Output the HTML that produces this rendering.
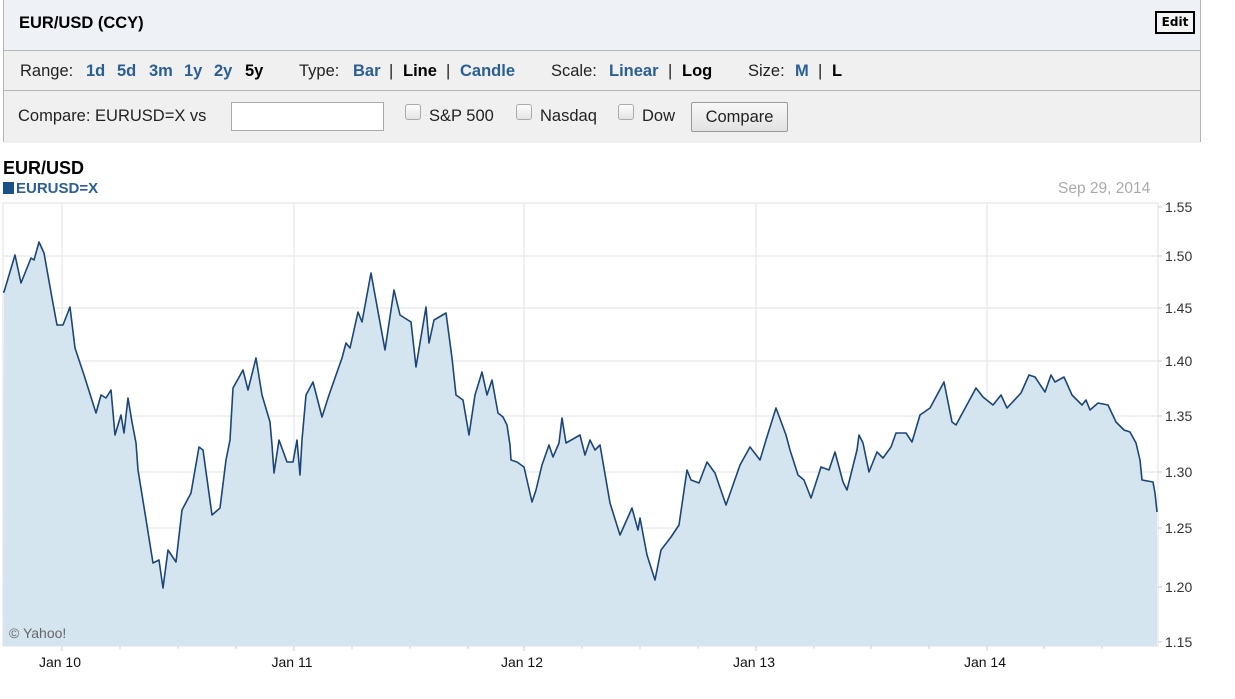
<!DOCTYPE html>
<html><head><meta charset="utf-8"><style>
body{margin:0;width:1235px;height:699px;background:#fff;font-family:"Liberation Sans",Arial,sans-serif;position:relative;overflow:hidden}
.a{position:absolute;white-space:nowrap}
#box{position:absolute;left:3px;top:0;width:1196px;height:141px;border:1px solid #b5b5b5;border-top:none;background:#eef2f6}
.row{position:absolute;left:0;width:1196px;background:#f0f0f0;border-top:1px solid #b5b5b5}
.row .a{font-size:16.5px;color:#222}
.row .l{color:#2b5f94;font-weight:bold}
.row .b{color:#000;font-weight:bold}
.cb{position:absolute;width:14px;height:14px;border:1px solid #aaa;border-radius:3px;background:linear-gradient(#fdfdfd,#e4e4e4)}
</style></head><body>
<div id="box">
 <div class="a" style="left:15px;top:14px;font-size:16.5px;font-weight:bold">EUR/USD (CCY)</div>
 <div class="a" style="left:1151px;top:11px;width:36px;height:19px;border:2px solid #000;background:#f4f4f4;font-family:'DejaVu Sans',sans-serif;font-size:12px;font-weight:bold;text-align:center;line-height:19px">Edit</div>
 <div class="row" style="top:50px;height:39px">
  <div class="a" style="left:16px;top:11px">Range:</div>
  <div class="a l" style="left:82px;top:11px">1d</div>
  <div class="a l" style="left:113px;top:11px">5d</div>
  <div class="a l" style="left:145px;top:11px">3m</div>
  <div class="a l" style="left:180px;top:11px">1y</div>
  <div class="a l" style="left:210px;top:11px">2y</div>
  <div class="a b" style="left:241px;top:11px">5y</div>
  <div class="a" style="left:295px;top:11px">Type:</div>
  <div class="a l" style="left:349px;top:11px">Bar</div>
  <div class="a" style="left:385px;top:11px">|</div>
  <div class="a b" style="left:399px;top:11px">Line</div>
  <div class="a" style="left:442px;top:11px">|</div>
  <div class="a l" style="left:456px;top:11px">Candle</div>
  <div class="a" style="left:547px;top:11px">Scale:</div>
  <div class="a l" style="left:605px;top:11px">Linear</div>
  <div class="a" style="left:664px;top:11px">|</div>
  <div class="a b" style="left:678px;top:11px">Log</div>
  <div class="a" style="left:744px;top:11px">Size:</div>
  <div class="a l" style="left:791px;top:11px">M</div>
  <div class="a" style="left:814px;top:11px">|</div>
  <div class="a b" style="left:828px;top:11px">L</div>
 </div>
 <div class="row" style="top:90px;height:52px">
  <div class="a" style="left:14px;top:16px">Compare: EURUSD=X vs</div>
  <div class="a" style="left:227px;top:11px;width:151px;height:27px;border:1px solid #aaa;background:#fff"></div>
  <div class="cb" style="left:401px;top:13px"></div><div class="a" style="left:425px;top:16px">S&amp;P 500</div>
  <div class="cb" style="left:512px;top:13px"></div><div class="a" style="left:536px;top:16px">Nasdaq</div>
  <div class="cb" style="left:614px;top:13px"></div><div class="a" style="left:638px;top:16px">Dow</div>
  <div class="a" style="left:687px;top:11px;width:95px;height:28px;border:1px solid #999;border-radius:2px;background:linear-gradient(#f8f8f8,#e2e2e2);text-align:center;line-height:28px">Compare</div>
 </div>
</div>
<div class="a" style="left:3px;top:158px;font-size:18px;font-weight:bold">EUR/USD</div>
<div class="a" style="left:3px;top:180px;font-size:15px;font-weight:bold;color:#2b5f94"><span style="display:inline-block;width:11px;height:12px;background:#1d4f88;vertical-align:-1px;margin-right:2px"></span>EURUSD=X</div>
<div class="a" style="left:1058px;top:180px;font-size:15.5px;color:#aaa">Sep 29, 2014</div>
<svg class="a" style="left:0;top:0" width="1235" height="699">
<rect x="3" y="203" width="1155" height="443" fill="#fff" stroke="#e2e2e2"/>
<g stroke="#e8ecf0" stroke-width="1.5">
<line x1="3" y1="256" x2="1158" y2="256"/><line x1="3" y1="308" x2="1158" y2="308"/><line x1="3" y1="361" x2="1158" y2="361"/><line x1="3" y1="416" x2="1158" y2="416"/><line x1="3" y1="472" x2="1158" y2="472"/><line x1="3" y1="528" x2="1158" y2="528"/><line x1="3" y1="587" x2="1158" y2="587"/>
<line x1="62" y1="203" x2="62" y2="646"/><line x1="294" y1="203" x2="294" y2="646"/><line x1="524" y1="203" x2="524" y2="646"/><line x1="756" y1="203" x2="756" y2="646"/><line x1="987" y1="203" x2="987" y2="646"/>
</g>
<polygon fill="#d5e5f0" points="3,646 4,292 15,255 21,283 31,258 34,260 39,242 44,253 52,298 57,325 63,325 70,307 75,348 84,375 96,413 101,395 106,398 111,390 115,435 121,415 124,433 128,398 132,422 136,443 138,470 144,507 153,563 159,560 163,588 168,550 176,562 182,510 191,493 199,447 203,450 212,515 220,508 226,460 230,440 233,388 243,370 248,390 256,358 262,395 270,422 272,445 274,473 279,440 287,462 293,462 297,440 300,475 302,440 306,395 313,382 322,417 329,395 342,358 346,343 350,348 358,312 362,322 371,273 375,295 385,350 394,290 400,315 411,322 416,367 426,307 429,343 434,320 446,313 452,358 456,395 463,400 469,435 475,395 482,372 487,395 492,380 498,413 503,417 507,425 510,445 511,460 517,462 524,467 532,502 536,490 542,465 549,445 553,457 559,443 562,418 566,443 580,435 585,455 590,440 595,450 600,445 610,503 620,535 632,508 638,530 640,518 647,555 655,580 661,550 671,537 679,525 687,470 691,480 699,483 707,462 715,473 726,505 740,465 750,447 760,460 766,440 776,408 786,435 790,450 798,475 804,480 811,498 821,467 829,470 835,452 843,482 847,490 857,450 859,435 863,443 869,472 877,452 883,458 891,447 896,433 906,433 912,442 920,415 930,408 944,382 952,422 956,425 976,388 983,397 993,405 1001,395 1007,408 1021,393 1029,375 1035,377 1045,392 1051,375 1055,382 1064,377 1072,395 1082,405 1086,400 1090,410 1098,403 1108,405 1116,422 1124,430 1130,432 1136,443 1140,460 1142,480 1153,482 1155,493 1157,512 1157,646"/>
<polyline fill="none" stroke="#1b4677" stroke-width="1.6" stroke-linejoin="round" points="3,292 4,292 15,255 21,283 31,258 34,260 39,242 44,253 52,298 57,325 63,325 70,307 75,348 84,375 96,413 101,395 106,398 111,390 115,435 121,415 124,433 128,398 132,422 136,443 138,470 144,507 153,563 159,560 163,588 168,550 176,562 182,510 191,493 199,447 203,450 212,515 220,508 226,460 230,440 233,388 243,370 248,390 256,358 262,395 270,422 272,445 274,473 279,440 287,462 293,462 297,440 300,475 302,440 306,395 313,382 322,417 329,395 342,358 346,343 350,348 358,312 362,322 371,273 375,295 385,350 394,290 400,315 411,322 416,367 426,307 429,343 434,320 446,313 452,358 456,395 463,400 469,435 475,395 482,372 487,395 492,380 498,413 503,417 507,425 510,445 511,460 517,462 524,467 532,502 536,490 542,465 549,445 553,457 559,443 562,418 566,443 580,435 585,455 590,440 595,450 600,445 610,503 620,535 632,508 638,530 640,518 647,555 655,580 661,550 671,537 679,525 687,470 691,480 699,483 707,462 715,473 726,505 740,465 750,447 760,460 766,440 776,408 786,435 790,450 798,475 804,480 811,498 821,467 829,470 835,452 843,482 847,490 857,450 859,435 863,443 869,472 877,452 883,458 891,447 896,433 906,433 912,442 920,415 930,408 944,382 952,422 956,425 976,388 983,397 993,405 1001,395 1007,408 1021,393 1029,375 1035,377 1045,392 1051,375 1055,382 1064,377 1072,395 1082,405 1086,400 1090,410 1098,403 1108,405 1116,422 1124,430 1130,432 1136,443 1140,460 1142,480 1153,482 1155,493 1157,512"/>
<g stroke="#ccc"><line x1="1158" y1="207" x2="1162" y2="207"/><line x1="1158" y1="256" x2="1162" y2="256"/><line x1="1158" y1="308" x2="1162" y2="308"/><line x1="1158" y1="361" x2="1162" y2="361"/><line x1="1158" y1="416" x2="1162" y2="416"/><line x1="1158" y1="472" x2="1162" y2="472"/><line x1="1158" y1="528" x2="1162" y2="528"/><line x1="1158" y1="587" x2="1162" y2="587"/><line x1="1158" y1="642" x2="1162" y2="642"/>
<line x1="62" y1="646" x2="62" y2="651"/><line x1="294" y1="646" x2="294" y2="651"/><line x1="524" y1="646" x2="524" y2="651"/><line x1="756" y1="646" x2="756" y2="651"/><line x1="987" y1="646" x2="987" y2="651"/>
<line x1="120" y1="646" x2="120" y2="649"/><line x1="178" y1="646" x2="178" y2="649"/><line x1="236" y1="646" x2="236" y2="649"/><line x1="352" y1="646" x2="352" y2="649"/><line x1="410" y1="646" x2="410" y2="649"/><line x1="468" y1="646" x2="468" y2="649"/><line x1="582" y1="646" x2="582" y2="649"/><line x1="640" y1="646" x2="640" y2="649"/><line x1="698" y1="646" x2="698" y2="649"/><line x1="814" y1="646" x2="814" y2="649"/><line x1="871" y1="646" x2="871" y2="649"/><line x1="929" y1="646" x2="929" y2="649"/><line x1="1044" y1="646" x2="1044" y2="649"/><line x1="1102" y1="646" x2="1102" y2="649"/></g>
<g font-family="Liberation Sans, Arial, sans-serif" font-size="14" fill="#333">
<text x="1165" y="212">1.55</text><text x="1165" y="261">1.50</text><text x="1165" y="313">1.45</text><text x="1165" y="366">1.40</text><text x="1165" y="421">1.35</text><text x="1165" y="477">1.30</text><text x="1165" y="533">1.25</text><text x="1165" y="592">1.20</text><text x="1165" y="647">1.15</text>
</g>
<g font-family="Liberation Sans, Arial, sans-serif" font-size="14" fill="#111" text-anchor="middle">
<text x="60" y="667">Jan 10</text><text x="292" y="667">Jan 11</text><text x="522" y="667">Jan 12</text><text x="754" y="667">Jan 13</text><text x="985" y="667">Jan 14</text>
</g>
<text x="9" y="638" font-family="Liberation Sans, Arial, sans-serif" font-size="14" fill="#666">© Yahoo!</text>
</svg>
</body></html>
